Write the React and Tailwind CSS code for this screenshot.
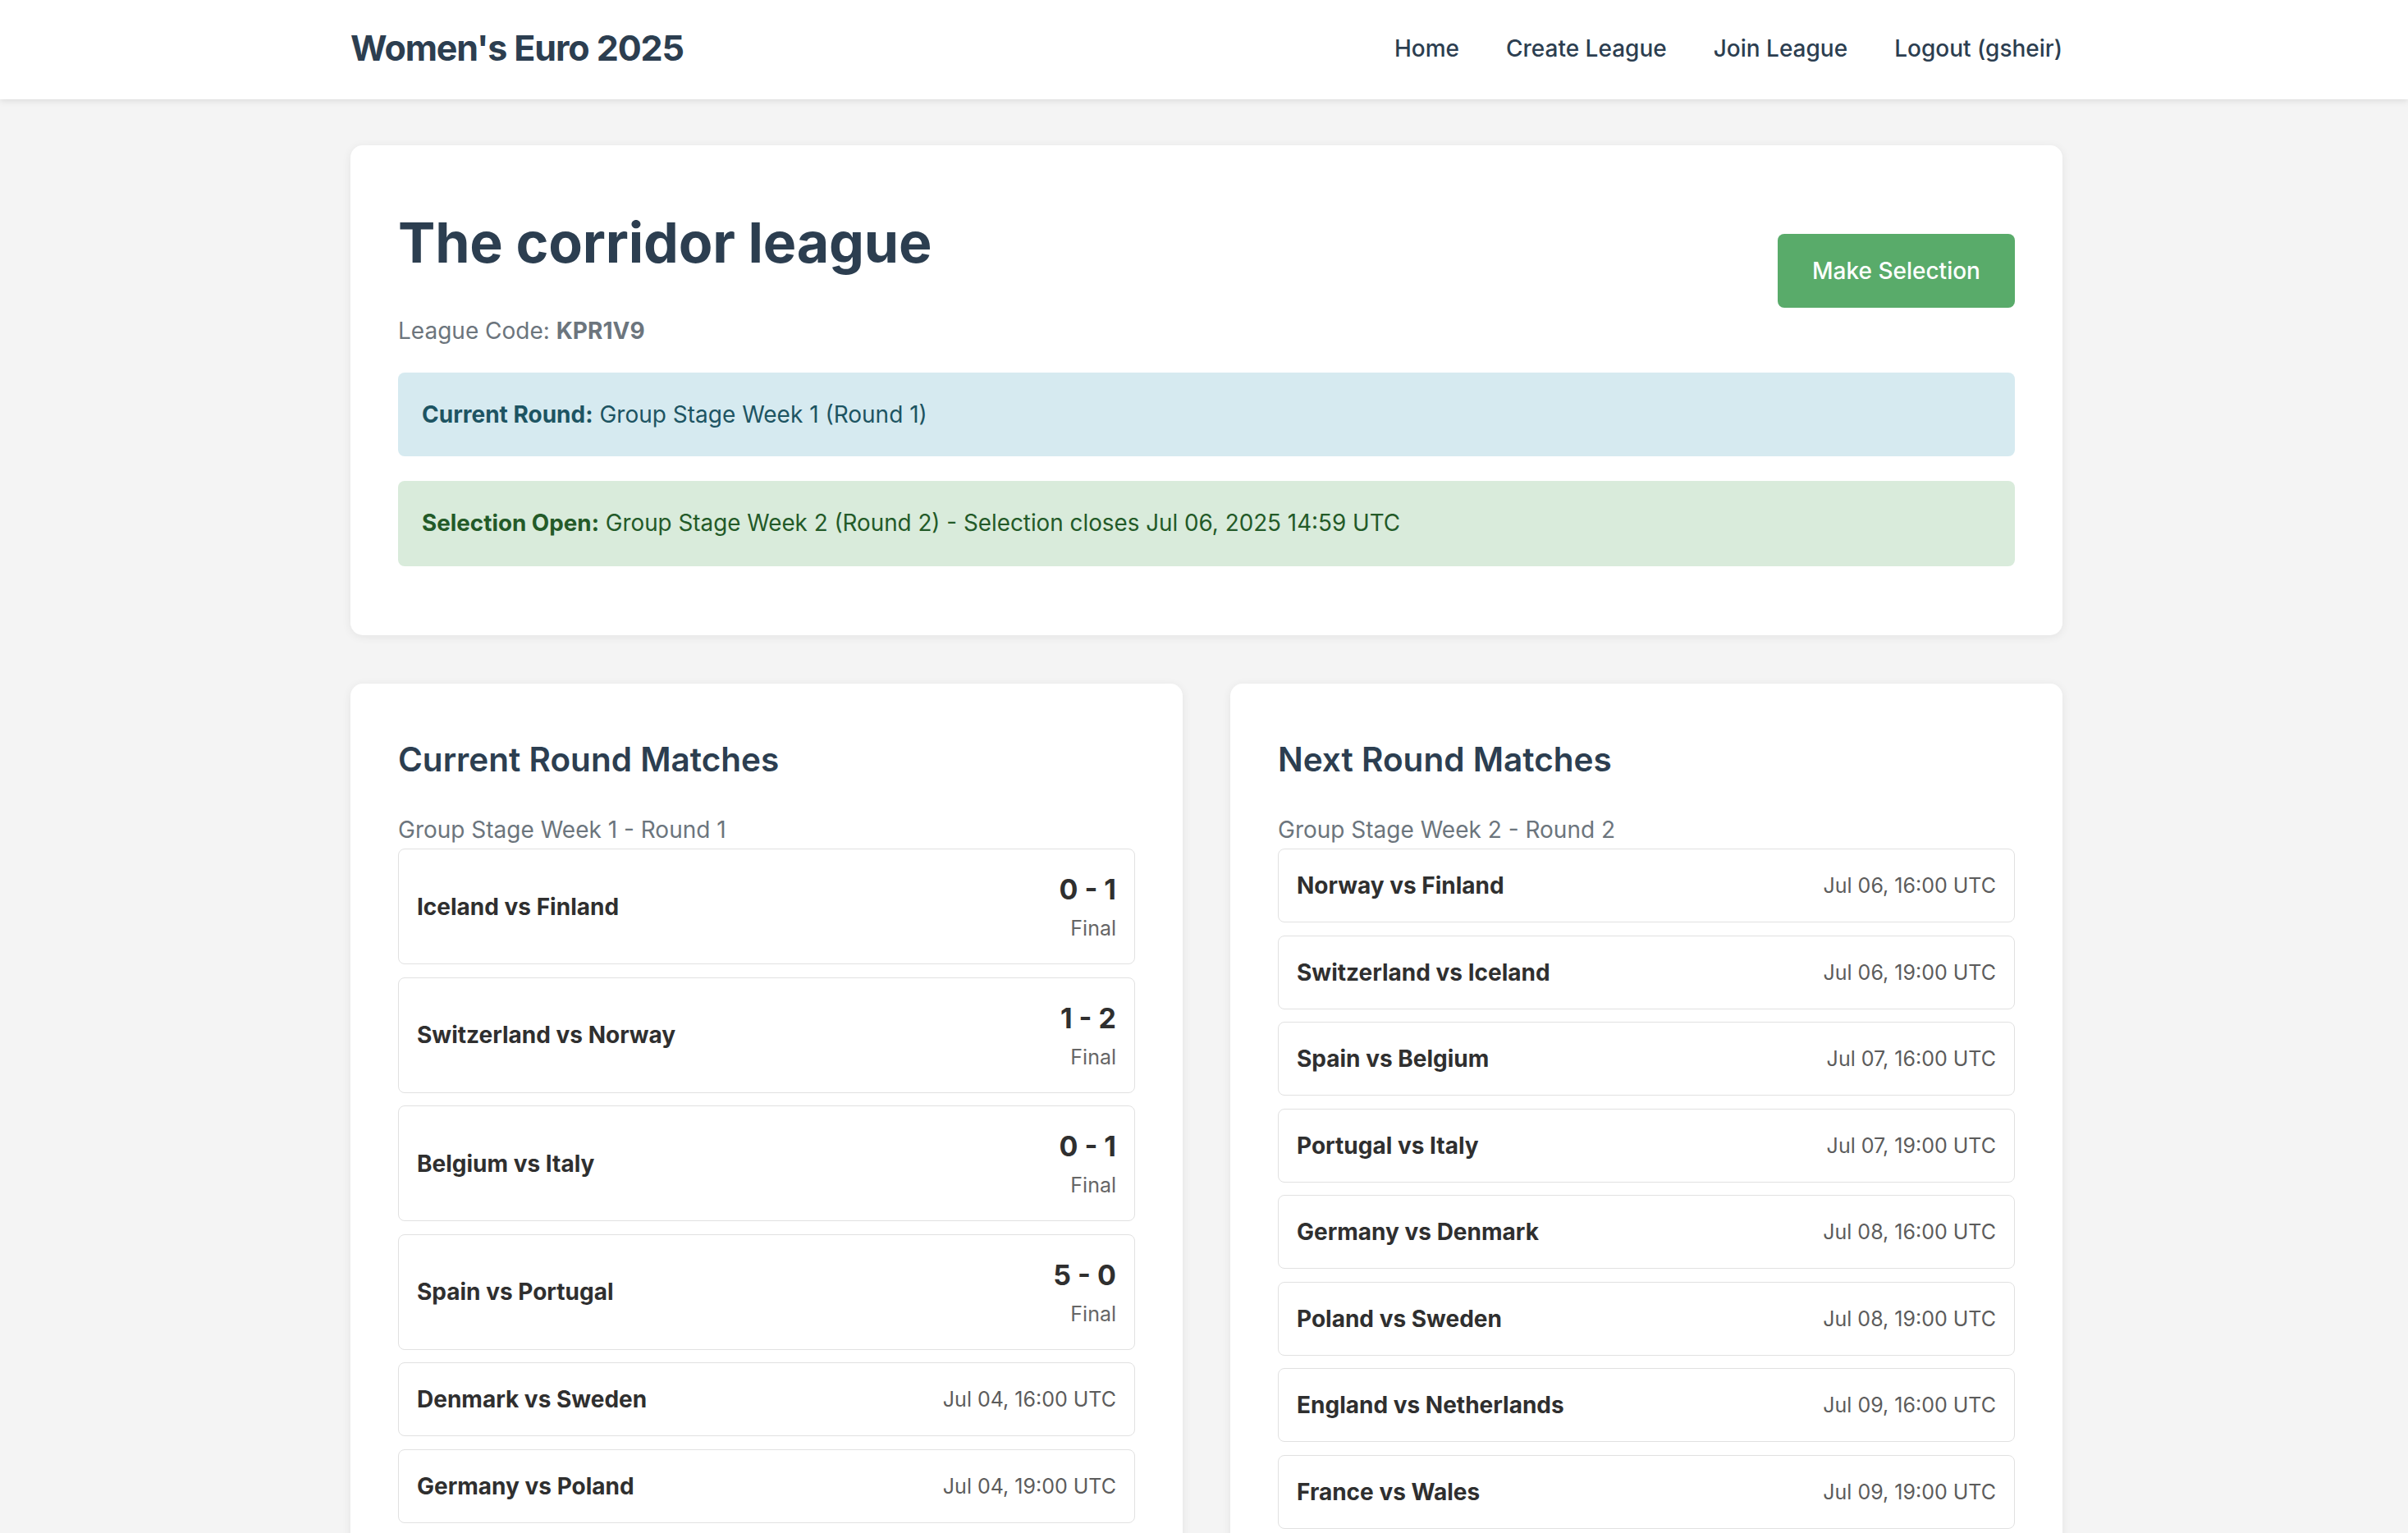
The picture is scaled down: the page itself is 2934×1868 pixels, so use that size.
import React from "react";

const font = { fontFamily: "Inter, 'Liberation Sans', sans-serif" };

const currentMatches = [
  { name: "Iceland vs Finland", score: "0 - 1" },
  { name: "Switzerland vs Norway", score: "1 - 2" },
  { name: "Belgium vs Italy", score: "0 - 1" },
  { name: "Spain vs Portugal", score: "5 - 0" },
  { name: "Denmark vs Sweden", date: "Jul 04, 16:00 UTC" },
  { name: "Germany vs Poland", date: "Jul 04, 19:00 UTC" },
  { name: "Wales vs Netherlands", date: "Jul 05, 16:00 UTC" },
  { name: "France vs England", date: "Jul 05, 19:00 UTC" },
];

const nextMatches = [
  { name: "Norway vs Finland", date: "Jul 06, 16:00 UTC" },
  { name: "Switzerland vs Iceland", date: "Jul 06, 19:00 UTC" },
  { name: "Spain vs Belgium", date: "Jul 07, 16:00 UTC" },
  { name: "Portugal vs Italy", date: "Jul 07, 19:00 UTC" },
  { name: "Germany vs Denmark", date: "Jul 08, 16:00 UTC" },
  { name: "Poland vs Sweden", date: "Jul 08, 19:00 UTC" },
  { name: "England vs Netherlands", date: "Jul 09, 16:00 UTC" },
  { name: "France vs Wales", date: "Jul 09, 19:00 UTC" },
];

function MatchRow({ m }) {
  if (m.score) {
    return (
      <div className="flex h-[141px] items-center justify-between rounded-[8px] border border-[#e1e1e1] bg-white px-[22px]">
        <span className="text-[28px] leading-[44px] font-bold text-[#2f2f2f]">{m.name}</span>
        <div className="flex flex-col items-end">
          <span className="text-[34px] leading-[53px] font-bold text-[#2f2f2f]">{m.score}</span>
          <span className="text-[25px] leading-[42px] text-[#666666]">Final</span>
        </div>
      </div>
    );
  }
  return (
    <div className="flex h-[90px] items-center justify-between rounded-[8px] border border-[#e1e1e1] bg-white px-[22px]">
      <span className="text-[28px] leading-[44px] font-bold text-[#2f2f2f]">{m.name}</span>
      <span className="text-[25px] leading-[40px] text-[#5c5c5c]">{m.date}</span>
    </div>
  );
}

function MatchCard({ title, subtitle, matches }) {
  return (
    <div className="rounded-[15px] bg-white px-[58px] pt-[69px] pb-[58px] shadow-[0_2px_12px_rgba(0,0,0,0.07)]">
      <h2 className="text-[40.5px] leading-[48px] font-semibold text-[#2c3e50]">{title}</h2>
      <p className="mt-[40px] text-[28px] leading-[42px] text-[#6c757d]">{subtitle}</p>
      <div className="mt-[2px] flex flex-col gap-[15.5px]">
        {matches.map((m) => (
          <MatchRow key={m.name} m={m} />
        ))}
      </div>
    </div>
  );
}

export default function App() {
  return (
    <div style={font} className="min-h-screen bg-[#f4f4f4]">
      <header className="bg-white shadow-[0_2px_8px_rgba(0,0,0,0.1)]">
        <div className="mx-auto flex h-[121px] w-[2092px] items-center justify-between pb-[4px] pl-[6px]">
          <span className="text-[43px] font-bold tracking-[-1.1px] text-[#2c3e50]">Women's Euro 2025</span>
          <nav className="flex items-center gap-[57px] text-[28px] font-medium text-[#2c3e50]">
            <span>Home</span>
            <span>Create League</span>
            <span>Join League</span>
            <span>Logout (gsheir)</span>
          </nav>
        </div>
      </header>

      <main className="mx-auto w-[2092px] pt-[56px] pl-[6px]">
        <section className="rounded-[15px] bg-white px-[58px] pt-[77px] pb-[84px] shadow-[0_2px_12px_rgba(0,0,0,0.07)]">
          <div className="flex items-start justify-between">
            <div>
              <h1 className="text-[68px] leading-[82px] font-bold tracking-[-0.2px] text-[#2c3e50]">The corridor league</h1>
              <p className="mt-[47px] text-[28px] leading-[40px] text-[#6c757d]">
                League Code: <strong className="font-bold">KPR1V9</strong>
              </p>
            </div>
            <button className="mt-[31px] h-[90px] w-[289px] rounded-[8px] bg-[#59ab6a] text-[28px] font-medium text-white">
              Make Selection
            </button>
          </div>
          <div className="mt-[31px] flex h-[102px] items-center rounded-[8px] bg-[#d6eaf0] px-[29px] text-[28px] text-[#1d5462]">
            <span>
              <strong className="font-bold">Current Round:</strong> Group Stage Week 1 (Round 1)
            </span>
          </div>
          <div className="mt-[30px] flex h-[104px] items-center rounded-[8px] bg-[#d9ebdb] px-[29px] text-[27.8px] text-[#235a28]">
            <span>
              <strong className="font-bold">Selection Open:</strong> Group Stage Week 2 (Round 2) - Selection closes Jul 06, 2025 14:59 UTC
            </span>
          </div>
        </section>

        <div className="mt-[59px] grid grid-cols-2 gap-[58px] pb-[58px]">
          <MatchCard title="Current Round Matches" subtitle="Group Stage Week 1 - Round 1" matches={currentMatches} />
          <MatchCard title="Next Round Matches" subtitle="Group Stage Week 2 - Round 2" matches={nextMatches} />
        </div>
      </main>
    </div>
  );
}
